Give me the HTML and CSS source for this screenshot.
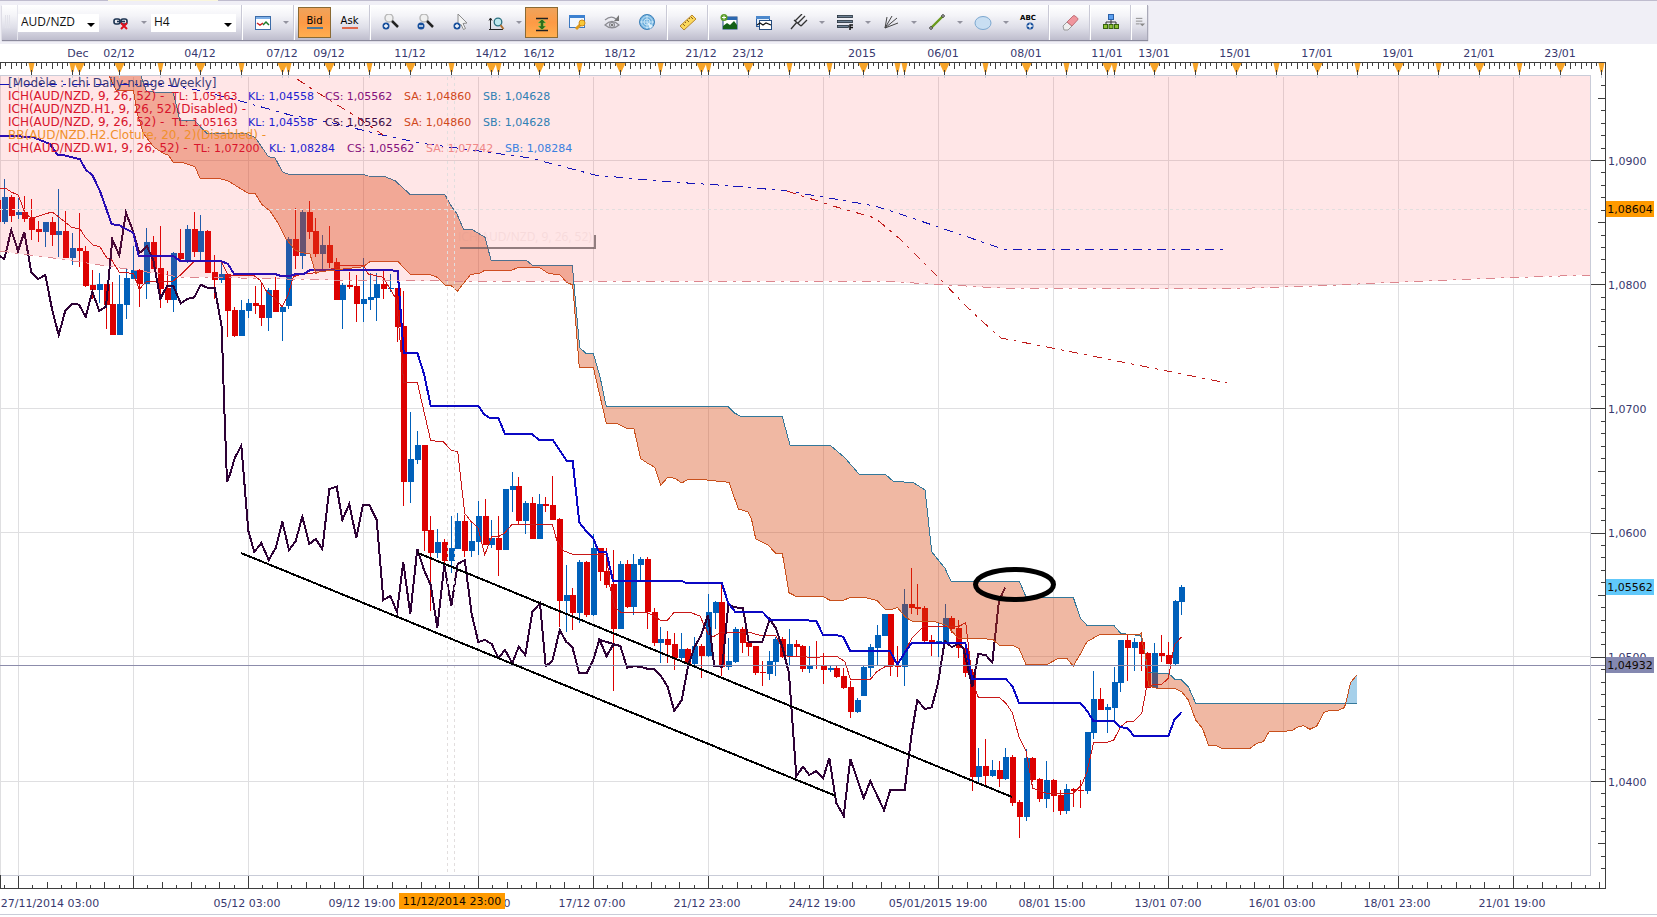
FILE: index.html
```html
<!DOCTYPE html>
<html lang="fr">
<head>
<meta charset="utf-8">
<title>AUD/NZD H4</title>
<link rel="stylesheet" href="styles.css">
</head>
<body>
<header class="top">
<div class="tab"></div>
<nav class="toolbar" aria-label="Chart tools">
<span class="grip"></span>
<label class="combo symbol"><select aria-label="Symbol"><option>AUD/NZD</option></select></label>
<button class="tool" aria-label="Unlink"><svg viewBox="0 0 18 18"><g fill="none" stroke="#1c3350" stroke-width="1.6"><rect x="2" y="5" width="6" height="5" rx="2"/><rect x="9" y="5" width="6" height="5" rx="2"/><path d="M5 7.500h8"/></g><path d="M9 9l6 6m0-6l-6 6" stroke="#e0101c" stroke-width="2"/></svg></button>
<button class="drop" aria-label="Link options"></button>
<label class="combo period"><select aria-label="Period"><option>H4</option></select></label>
<span class="sep"></span>
<button class="tool" aria-label="Indicators"><svg viewBox="0 0 18 18"><rect x="1.500" y="2.500" width="15" height="13" fill="#fff" stroke="#3c6ca8"/><path d="M2 3h14v2H2z" fill="#7fb0e8"/><path d="M3 9l3 2 3-2" stroke="#d02020" stroke-width="1.500" fill="none"/><path d="M9 11l3-3 3 3" stroke="#1c7a28" stroke-width="1.500" fill="none"/></svg></button>
<button class="drop" aria-label="Indicator list"></button>
<span class="sep"></span>
<button class="tool on bid">Bid</button>
<button class="tool ask">Ask</button>
<span class="sep"></span>
<button class="tool" aria-label="Zoom in"><svg viewBox="0 0 18 18"><circle cx="7" cy="4" r="4" fill="#f0f0f0" stroke="#b8b8b8" stroke-width="1.500"/><path d="M10 7l6 6" stroke="#222" stroke-width="2.500"/><circle cx="4" cy="12" r="3.500" fill="#174f9c"/><path d="M4 10v4M2 12h4" stroke="#fff" stroke-width="1.300"/></svg></button>
<button class="tool" aria-label="Zoom out"><svg viewBox="0 0 18 18"><circle cx="7" cy="4" r="4" fill="#f0f0f0" stroke="#b8b8b8" stroke-width="1.500"/><path d="M10 7l6 6" stroke="#222" stroke-width="2.500"/><circle cx="4" cy="12" r="3.500" fill="#174f9c"/><path d="M2 12h4" stroke="#fff" stroke-width="1.300"/></svg></button>
<button class="tool" aria-label="Select"><svg viewBox="0 0 18 18"><path d="M6 0l9 9-4 .500 2.500 5-2 1-2.500-5L6 13z" fill="#f4f4f4" stroke="#8c8c8c"/><circle cx="5" cy="12" r="3.500" fill="#174f9c"/><path d="M5 10v4M3 12h4" stroke="#fff" stroke-width="1.300"/></svg></button>
<button class="tool" aria-label="Zoom axis"><svg viewBox="0 0 18 18"><path d="M3.500 5v11M2 6.500L3.500 4 5 6.500M2 15.500h14" stroke="#222" fill="none"/><circle cx="11" cy="8" r="3.800" fill="#bfe8ee" stroke="#2a7080" stroke-width="1.300"/><path d="M13.500 11l3 4" stroke="#b07030" stroke-width="2"/></svg></button>
<button class="drop" aria-label="Axis zoom options"></button>
<button class="tool on" aria-label="Fit height"><svg viewBox="0 0 18 18"><path d="M3 4.500h12M3 16.500h12" stroke="#222" stroke-width="1.500"/><path d="M9 5l4 4h-2.500v3H13l-4 4-4-4h2.500V9H5z" fill="#2e6e1c" stroke="#9ecb50" stroke-width=".6"/></svg></button>
<button class="tool" aria-label="Window properties"><svg viewBox="0 0 18 18"><rect x="1.500" y="1.500" width="15" height="12" fill="#f2f7fd" stroke="#3c78c0"/><path d="M1 1h16v3H1z" fill="#3c80d0"/><path d="M8 15l5-5" stroke="#e09a18" stroke-width="3"/><circle cx="14" cy="9" r="3" fill="#f8c838" stroke="#d08a18"/></svg></button>
<button class="tool" aria-label="Visibility"><svg viewBox="0 0 18 18"><g fill="none" stroke="#8c8c92" stroke-width="1.200"><path d="M2 11q7-7 14 0-7 6-14 0z"/><circle cx="9" cy="11" r="2.500"/><path d="M2 6q6-5 11-1"/></g><circle cx="9" cy="11" r="1.200" fill="#777"/><path d="M16 1v6h-5z" fill="#777"/></svg></button>
<button class="tool" aria-label="World"><svg viewBox="0 0 18 18"><circle cx="9" cy="8" r="7.500" fill="#6fb0de" stroke="#3c80b8"/><g fill="none" stroke="#d4ecfa" stroke-width=".8"><circle cx="9" cy="8" r="3"/><circle cx="9" cy="8" r="5.500"/><path d="M9 1v14M2 8h14"/></g><path d="M9 8l6 4-3 3z" fill="#e0f2fc"/></svg></button>
<span class="sep"></span>
<button class="tool" aria-label="Ruler"><svg viewBox="0 0 18 18"><path d="M1 12L13 1l4 4L5 16z" fill="#fbd85c" stroke="#b8862c"/><path d="M4 10l2 2M6 8l1 1M8 6l2 2M10 4l1 1M12 3l2 2" stroke="#8a6020"/></svg></button>
<span class="sep"></span>
<button class="tool" aria-label="Add picture"><svg viewBox="0 0 18 18"><rect x="3" y="3" width="14" height="12" fill="#fff" stroke="#1c4884"/><path d="M3 3h14v3H3z" fill="#2c68b0"/><path d="M3 15v-3l4-3 3 2 4-4 3 4v4z" fill="#126018"/><circle cx="4" cy="3.500" r="3.500" fill="#5c9c28"/><path d="M4 1.500v4M2 3.500h4" stroke="#fff"/></svg></button>
<button class="tool" aria-label="Windows"><svg viewBox="0 0 18 18"><rect x="1.500" y="2.500" width="13" height="10" fill="#e4effa" stroke="#2c5c9c"/><path d="M1 2h14v3H1z" fill="#4c88cc"/><rect x="4.500" y="6.500" width="12" height="9" fill="#fff" stroke="#244c80"/><path d="M2 11l3-2 3 2 3-2 5 2" fill="none" stroke="#111" stroke-width="1.200"/></svg></button>
<button class="tool" aria-label="Pitchfork"><svg viewBox="0 0 18 18"><path d="M1 15L7 8M4 6l7 6M5 7l7-7M8 9l7-7M11 12l6-6" fill="none" stroke="#333" stroke-width="1.300"/></svg></button>
<button class="drop" aria-label="Pitchfork options"></button>
<button class="tool" aria-label="Fibonacci"><svg viewBox="0 0 18 18"><g fill="#6d8093" stroke="#26313d" stroke-width=".8"><rect x="1.400" y="1.400" width="15" height="2.200"/><rect x="1.400" y="6.400" width="15" height="2.200"/><rect x="1.400" y="11.400" width="11" height="2.200"/></g><path d="M14 16v-5h3M14 13.500h3" fill="none" stroke="#111" stroke-width="1.500"/></svg></button>
<button class="drop" aria-label="Fibonacci options"></button>
<button class="tool" aria-label="Fan"><svg viewBox="0 0 18 18"><path d="M3 14L5 3M3 14l7-12M3 14L15 4M3 14l13-5" stroke="#444" fill="none"/></svg></button>
<button class="drop" aria-label="Fan options"></button>
<button class="tool" aria-label="Line"><svg viewBox="0 0 18 18"><path d="M3 14L15 2" stroke="#6a9a1c" stroke-width="2.400"/><circle cx="3" cy="14" r="1.300" fill="#eee" stroke="#333"/><circle cx="15" cy="2" r="1.300" fill="#eee" stroke="#333"/></svg></button>
<button class="drop" aria-label="Line options"></button>
<button class="tool" aria-label="Ellipse"><svg viewBox="0 0 18 18"><ellipse cx="9" cy="9" rx="8" ry="6.500" fill="#c8def2" stroke="#7ca8d0"/></svg></button>
<button class="drop" aria-label="Ellipse options"></button>
<button class="tool abc" aria-label="Text ABC"><b>ABC</b><svg viewBox="0 0 18 18"><circle cx="10" cy="9" r="3.500" fill="#174f9c"/><path d="M10 6.500v5M7.500 9h5" stroke="#fff" stroke-width="1.300"/></svg></button>
<span class="sep"></span>
<button class="tool" aria-label="Erase"><svg viewBox="0 0 18 18"><path d="M2 12l4-4 5 4-4 4H3z" fill="#eee" stroke="#999"/><path d="M6 8l6-6q1-1 2 0l2.500 2q1 1 0 2L11 12z" fill="#f0959d" stroke="#c07078"/></svg></button>
<span class="sep"></span>
<button class="tool" aria-label="Hierarchy"><svg viewBox="0 0 18 18"><path d="M9 5v6M4 11V8h10v3" fill="none" stroke="#333"/><rect x="6.500" y=".5" width="5" height="5" fill="#5ca0f0" stroke="#2c60a8"/><g fill="#8cc034" stroke="#38640c"><rect x="1.500" y="10.500" width="4" height="4"/><rect x="7" y="10.500" width="4" height="4"/><rect x="12.500" y="10.500" width="4" height="4"/></g></svg></button>
<span class="sep"></span>
<button class="more" aria-label="More tools"><svg viewBox="0 0 12 12"><path d="M1 1.500h7M1 4.500h7M1 7.500h4" stroke="#888"/><path d="M5 7h6L8 10z" fill="#888"/></svg></button>
</nav>
</header>
<main class="chart">
<svg id="chart" viewBox="0 44 1657 873" role="img" aria-label="AUD/NZD, H4">
<rect class="paper" y="44" width="1657" height="873"/>
<g id="grid"></g>
<g id="candles"></g>
<g id="lines"></g>
<g id="cloud"></g>
<g id="weekly"></g>
<g id="drawings"></g>
<g id="axes"></g>
<g id="legend"></g>
</svg>
</main>
<script src="chart.js"></script>
</body>
</html>
```
FILE: styles.css
```css
* { box-sizing: border-box; }
body { margin: 0; background: #f0eff6; font-family: "DejaVu Sans", Verdana, sans-serif; font-size: 11px; overflow-x: hidden; }
.top { height: 44px; border-top: 1px solid #bfbcce; padding: 4px 0 0 2px; position: relative; }
.tab { position: absolute; left: 108px; top: -1px; width: 110px; height: 1px; background: #faf6dc; }
.toolbar { display: flex; align-items: stretch; width: max-content; height: 35px; background: linear-gradient(#fff, #f4f4f8 30%, #dedee8 65%, #bebdcd); box-shadow: 0 1px 1px #8b8a9c; }
.grip { width: 16px; border-right: 1px solid #e6e6ee; background: repeating-linear-gradient(90deg, #e2e2ea 0 1px, transparent 1px 2px) 3px 10px / 6px 13px no-repeat; }
.combo { position: relative; height: 18px; margin-top: 9px; background: #fff; }
.symbol { width: 81px; margin-right: 4px; }
.period { width: 85px; margin: 9px 3px 0 2px; }
.combo::after { content: ""; position: absolute; right: 4px; top: 9px; border: 4px solid transparent; border-top-color: #000; border-bottom: 0; pointer-events: none; }
.combo select { appearance: none; border: 0; background: none; width: 100%; height: 16px; padding: 0 3px; font: 12px "Open Sans", "Noto Sans", sans-serif; line-height: 16px; color: #111; }
button { border: 0; background: none; padding: 0; font: inherit; color: #000; display: flex; align-items: center; justify-content: center; }
.tool { width: 35px; flex: none; position: relative; }
.tool svg { width: 18px; height: 18px; }
.on { width: 33px; margin: 2px 1px; background: linear-gradient(#efa35c, #fd9a45 50%, #ffae50); border: 1px solid #8a6a34; }
.bid, .ask { font-size: 10px; align-items: flex-start; padding-top: 10px; }
.bid { padding-top: 7px; }
.bid::after, .ask::after { content: ""; position: absolute; width: 16px; height: 2px; top: 22px; background: #e0684c; }
.bid::after { background: #4c7898; top: 19px; }
.abc b { position: absolute; top: 9px; left: 9px; font-size: 7px; line-height: 8px; }
.abc svg { margin-top: 6px; }
.drop { width: 11px; flex: none; }
.drop::after { content: ""; border: 3px solid transparent; border-top-color: #93939f; border-bottom: 0; }
.sep { width: 6px; background: linear-gradient(90deg, transparent 2px, #c9c9d6 2px 3px, #fff 3px 4px, transparent 4px); }
.more { width: 14px; border-right: 1px solid #a9a9b8; }
.more svg { width: 11px; height: 11px; }

.chart svg { display: block; width: 100%; height: auto; }
.chart text { font-size: 11px; fill: #38386e; }
.chart .name { font-size: 12px; }
.chart .tag { fill: #100800; }
.chart .mid { text-anchor: middle; }
.paper { fill: #fff; }
#grid, #candles, #lines, #weekly, #cloud, #axes { shape-rendering: crispEdges; }
#lines polyline, #weekly polyline, #cloud polyline { fill: none; }
.grid { stroke: #dfdfe1; }
.border { fill: none; stroke: #c9ccd8; }
.axis { stroke: #3e3e3e; fill: none; }
.up { fill: #0060ba; }
.down { fill: #dc0000; }
.tenkan { stroke: #c81818; }
.kijun { stroke: #0b08c4; stroke-width: 2; }
.chikou { stroke: #2e0236; stroke-width: 2; }
.senkou-a { stroke: #c8501c; }
.senkou-b { stroke: #34789a; }
.bear { fill: #d8440c; fill-opacity: .38; }
.bull { fill: #a6d0ea; }
.pink { fill: #ff3c46; fill-opacity: .13; }
.dash { stroke-dasharray: 9 6 3 6; }
.w-kijun { stroke: #1414b8; }
.w-tenkan { stroke: #c01c1c; }
.w-span { stroke: #dc868e; }
.cross { stroke: #e2dede; stroke-dasharray: 3 3; shape-rendering: crispEdges; }
.level { stroke: #8c8cab; shape-rendering: crispEdges; }
.trend { stroke: #000; stroke-width: 2; shape-rendering: crispEdges; }
.ring { stroke: #000; stroke-width: 5; fill: none; }
.marker { fill: #f7a428; shape-rendering: auto; }
.shadow { fill: none; stroke: #6e5a5c; stroke-width: 2; opacity: .75; }
.chart .ghost { font-family: "Open Sans", "Noto Sans", sans-serif; font-size: 12px; fill: #c08888; opacity: .12; }
```
FILE: chart.js
```js
const NS = 'http://www.w3.org/2000/svg';
const layer = id => document.getElementById(id);
function add(id, tag, attrs, text) {
  const el = document.createElementNS(NS, tag);
  for (const key in attrs) el.setAttribute(key, attrs[key]);
  if (text !== undefined) el.textContent = text;
  layer(id).appendChild(el);
  return el;
}
const line = (id, cls, x1, y1, x2, y2) => add(id, 'line', { class: cls, x1, y1, x2, y2 });
// Series are stored as panels: origin x, origin y, then points in thirds of a unit.
function series(...panels) {
  const out = [];
  for (const [ox, oy, data] of panels)
    for (const pair of data.trim().split(/\s+/)) {
      const [x, y] = pair.split(',').map(Number);
      out.push([ox + x / 3, oy + y / 3]);
    }
  return out;
}
const str = pts => pts.map(p => p[0].toFixed(1) + ',' + p[1].toFixed(1)).join(' ');
const poly = (id, cls, pts) => add(id, 'polyline', { class: cls, points: str(pts) });

const priceY = [160.5, 284.5, 408.5, 532.5, 656.5, 781.5];
for (let i = 0; i < 14; i++) line('grid', 'grid', 18.5 + 115 * i, 77, 18.5 + 115 * i, 875);
priceY.forEach(y => line('grid', 'grid', 0, y, 1590, y));
line('grid', 'grid', 0.5, 76, 0.5, 875);

// Candles: direction, high, body top, body bottom, low
const groups = [
  [150, `R 150 150 215 215|B 87 141 215 221|R 135 141 197 215|B 145 186 195 208|R 137 186 206 217|R 147 205 239 270|R 213 237 245 275|B 216 216 245 290|R 200 216 254 287|B 117 243 254 320|R 183 243 323 323|B 250 294 323 345|R 190 294 303 350|R 288 303 407 410|R 360 404 419 447|B 370 402 419 458|R 402 402 464 537|R 395 462 554 554|B 375 462 554 554|B 355 384 464 507|B 288 360 387 387|R 357 360 402 470|B 235 276 402 446|R 258 276 356 356|R 228 354 417 473|R 363 415 450 460|B 306 309 450 486|R 238 309 328 330|B 225 237 329 340|R 186 237 305 320|B 195 243 305 330|R 240 243 368 370|R 315 366 390 447|B 335 372 390 398|R 370 373 482 560|R 470 480 557 560|B 450 480 557 557|B 447 460 482 505|R 408 460 467 491|R 397 465 503 527|B 415 420 503 543|R 380 420 486 486|B 465 470 486 573|B 260 267 467 478|R 174 267 318 358|B 180 186 318 358|R 153 186 246 266|R 205 243 311 320|B 255 285 311 357|R 228 285 339 354|R 323 336 450 450|B 400 405 450 536|R 365 405 411 417|R 376 408 461 515|B 325 447 461 515|B 370 441 450 480|B 370 402 444 512|R 360 402 417 446|B 372 414 417 426|R 414 414 531 575|R 423 528 995 1067`],
  [230, `B 547 687 755 818|B 603 645 690 702|R 645 645 903 963|R 858 900 968 1142|B 898 936 968 985|R 927 936 992 1005|B 858 954 992 1030|B 850 873 956 956|R 855 873 963 980|B 873 933 963 981|B 813 858 936 975|R 807 858 944 944|B 870 924 944 953|R 858 924 959 1037|B 776 777 960 960|B 727 768 779 846|R 740 768 873 881|B 812 819 873 911|R 801 819 926 926|B 792 822 927 927|R 800 822 827 845|R 738 825 869 869|R 864 867 1113 1190`],
  [440, `B 375 465 483 575|R 445 465 518 570|B 360 366 518 550|R 362 366 524 530|B 283 324 524 527|R 324 324 395 422|R 325 393 434 445|R 331 432 567 752`],
  [520, `B 123 132 326 326|R 120 132 260 264|B 102 132 261 286|B 112 117 134 182|R 112 117 277 326|R 263 276 368 378|B 320 357 368 428|R 333 357 374 428|R 340 372 413 449|B 340 387 413 425|R 385 387 431 440|B 352 378 431 434|R 372 378 408 474|B 222 276 408 410|B 243 246 279 327|R 190 246 440 468|B 355 423 440 450|B 320 327 426 428|R 320 327 368 400|R 365 366 380 407|R 378 378 459 465|R 423 456 460 498|B 393 423 461 480|B 352 357 426 467|R 350 357 411 415|B 327 372 409 435|R 360 372 380 408|R 375 378 447 455|B 377 438 447 458|R 363 435 438 447|R 400 438 450 491|B 434 444 449 455|R 435 444 471 474|R 445 468 503 508|R 484 501 575 593|B 533 540 575 578|B 435 441 528 528|B 373 381 443 470|B 316 345 383 436|B 282 282 347 347|R 282 282 437 467|R 377 436 440 470|B 206 252 440 497|R 144 252 264 282|R 192 261 267 286|R 258 264 363 368|R 345 360 366 408|B 305 363 369 410|B 252 294 368 370|R 288 294 326 340|R 300 324 384 414|R 382 383 459 470|R 447 456 771 812|B 685 738 771 785|R 657 738 767 795|B 720 750 767 770|R 722 750 776 800|B 684 711 777 780|R 705 711 849 858|R 840 846 891 954|B 686 714 891 903|R 712 714 780 785|R 773 777 836 845|B 722 780 837 863|R 778 780 827 876|R 810 825 873 885|B 792 806 873 883|R 803 806 812 862|R 780 810 813 865|B 636 636 813 822|B 453 537 639 658|R 503 537 570 570|B 553 561 570 638|B 440 486 563 605|B 360 360 488 515|R 343 360 384 482|B 355 366 384 453|R 362 365 402 453|R 395 399 504 504|B 370 399 504 504|R 345 399 408 426|R 365 405 432 432|B 240 243 432 435|B 195 201 246 285`]
];
let slot = -1;
for (const [oy, rows] of groups)
  for (const row of rows.split('|')) {
    const [dir, ...v] = row.split(' ');
    const [high, top, bottom, low] = v.map(n => Math.round(oy + n / 3));
    const cls = dir === 'B' ? 'up' : 'down';
    const x = Math.floor(4.7 + 6.765 * slot++);
    add('candles', 'rect', { class: cls, x, y: high, width: 1, height: Math.max(1, low - high) });
    add('candles', 'rect', { class: cls, x: x - 2, y: top, width: 6, height: Math.max(1, bottom - top) });
  }

poly('lines', 'tenkan', series(
  [0, 150, '0,115 20,117 35,127 55,135 75,190 95,205 125,195 156,186 175,200 215,232 240,237 257,264 280,285 300,291 320,323 335,330 358,367 400,370 418,418 440,393 520,393 545,372 583,333 663,333 684,375 760,375 780,390 800,425 825,445 846,470 866,430 880,380 906,372 950,368 1000,355 1028,345 1090,345 1105,372 1150,382 1160,400 1185,442'],
  [350, 230, '140,210 150,330 161,457 202,457 222,545 242,632 280,635 303,660 323,665 344,850 364,875 384,893 404,975 425,920 445,920 465,908 486,883 607,883 620,930 640,962 668,973 770,973'],
  [600, 520, '20,105 30,200 45,262 62,277 140,277 162,288 180,300 203,300 222,277 270,277 300,288 325,343 340,350 365,336 446,336 465,342 487,347 527,347 560,408 640,412 710,409 735,425 751,477 812,477 830,455 855,440 890,437 910,405 935,355 970,320 1075,320 1097,308 1108,400 1117,480 1135,532'],
  [900, 520, '298,532 318,550 337,578 357,650 378,693 398,805 440,820 520,820 545,795 561,755 581,667 622,667 641,660 662,620 682,604 702,604 725,580 740,500 755,495 785,493 805,475 823,375 845,350']));
poly('lines', 'chikou', series(
  [0, 150, '0,318 13,327 34,240 54,303 73,246 94,367 115,387 136,375 156,477 176,555 196,482 217,461 237,464 257,500 277,425 298,483 318,470 337,268 358,316 378,188 400,246 418,310 440,288 460,330 481,446 501,408 520,408 542,460 562,447 583,442 602,404 622,413 644,414 665,530 672,750'],
  [230, 440, '-9,125 0,103 14,55 34,16 55,272 73,336 94,309 116,360 137,324 157,245 177,330 197,303 217,230 238,312 257,297 277,327 298,147 320,140 337,240 358,192 379,294 399,194 418,194 440,240 460,480 481,468 501,516 520,367 541,522 562,327 582,390 602,435 622,564 643,375 664,498 683,372 704,360 725,522 745,606 765,600 785,612 805,654 825,630 847,669 866,620 886,645 907,516 930,490 947,678 967,664 989,570 1009,606 1027,620 1047,699 1070,699 1090,660 1108,600 1130,648 1150,613 1170,618'],
  [600, 520, '0,360 19,408 40,375 61,377 81,443 101,439 121,440 142,446 163,447 183,468 203,501 223,573 245,540 265,435 284,380 304,345 324,285 343,438 367,440 385,255 405,262 429,264 446,366 487,366 509,297 527,324 547,380 567,460 589,769 609,740 628,765 649,753 670,774 688,714 709,849 731,888 751,717 791,834 811,783 852,871 871,810 914,810 935,640 952,540 974,567 995,562 1014,490 1034,363 1055,381 1075,372 1090,385 1117,500 1135,402 1157,405 1177,428 1196,250 1206,222 1216,203']));
poly('lines', 'kijun', series(
  [0, 0, '0,408 40,408 100,412 150,432'],
  [0, 150, '172,14 190,15 240,28 258,60 277,75 300,123 335,223 357,225 370,233 400,248 416,318 520,318 541,333 663,333 684,342 702,372 825,372 843,378 870,378 885,373 912,372 930,360 1170,360 1193,364'],
  [350, 230, '161,368 202,368 223,435 242,528 385,528 402,552 419,564 445,564 465,612 546,612 567,630 608,630 650,692 668,693 688,877 708,903 729,923 746,965 769,965 789,1053'],
  [600, 520, '245,183 257,188 365,188 385,250 405,275 487,275 509,299 590,299 649,303 669,345 709,345 729,350 751,393 870,393 892,434 915,397 935,369 1096,369 1117,477'],
  [900, 520, '317,477 337,498 357,549 541,549 561,572 580,603 641,603 662,622 682,624 702,648 805,648 823,600 845,575']));

const weeklySpan = [[0,251],[53,258],[100,265],[120,268],[180,277],[240,278],[333,280],[450,281],[880,281],[1000,288],[1220,289],[1317,286],[1400,282],[1500,278],[1590,275]];
add('weekly', 'polygon', { class: 'pink', points: '0,76 ' + str(weeklySpan) + ' 1590,76' });
poly('weekly', 'dash w-span', weeklySpan);
poly('weekly', 'dash w-kijun', [[0,84],[160,84],[197,90],[233,99],[290,115],[333,123],[382,135],[420,143],[530,158],[595,175],[657,181],[733,186],[787,191],[823,197],[875,206],[900,214],[1003,249],[1227,249]]);
poly('weekly', 'dash w-tenkan', [[297,79],[315,91],[360,119],[383,135]]);
poly('weekly', 'dash w-tenkan', [[787,191],[833,206],[875,218],[900,239],[944,283],[964,304],[983,322],[1001,338],[1057,349],[1227,383]]);

const spanA = series(
  [0, 0, '328,228 348,270 400,270 412,340 430,400 460,440'],
  [0, 150, '490,10 505,15 520,37 550,38 585,50 600,85 655,85 683,92 720,115 745,130 765,130 785,163 810,183 835,220 857,265 885,300 905,308 930,312 947,370 960,365 1090,350 1110,335'],
  [350, 230, '143,94 180,132 235,132 262,142 285,165 305,168 322,184 362,133 385,131 405,121 485,121 505,112 568,112 595,130 630,135 650,157 668,165 688,412 730,412 769,580 805,582 830,595 852,597 872,686 893,700 914,712 932,766 953,742 975,745 995,759 1015,748 1050,748 1137,757'],
  [600, 520, '415,-33 445,-24 455,0 467,56 505,76 527,100 547,100 567,218 590,230 670,230 690,241 730,241 755,231 800,234 832,242 855,268 880,267 892,262 915,290 935,303 1000,303 1040,317 1075,355 1160,357'],
  [900, 520, '278,358 298,376 337,376 357,385 378,434 440,434 475,415 500,415 520,438 541,402 561,365 600,343 720,343 724,338 730,380 740,425 745,497 770,505 825,505 845,515 865,540 887,600 908,626 925,675 950,677 965,685 1050,685 1070,670 1090,665 1108,634 1157,634 1180,630 1190,622 1210,617 1230,628 1250,618 1272,577 1290,571 1315,571 1333,563 1337,550']);
const spanATail = series([900, 520, '1337,550 1352,487 1371,465']);
const spanB = series(
  [0, 0, '423,228 440,275 520,279 540,362 585,363 620,400 735,400 765,412'],
  [0, 150, '795,5 805,20 825,23 847,65 865,73 1090,73 1105,78 1155,80 1185,92'],
  [400, 180, '30,43 134,43 155,80 170,100 190,147 215,148 255,172 273,240 378,240 397,256 517,256 528,380 539,503 558,520 580,520 600,590 619,680 985,680 1005,700 1025,710 1147,710 1170,795 1290,795 1335,834 1377,882 1458,885 1479,903 1542,909 1575,930'],
  [900, 520, '85,0 95,95 115,120 135,145 153,184 358,184 378,230 387,232 520,232 541,295 561,316 641,316 662,340 685,343 722,347 735,400 743,458 805,460 825,478 843,478 865,500 887,550 1337,550']);
const end = [1357, 703.3];
add('cloud', 'polygon', { class: 'bear', points: str(spanA) + ' ' + str([...spanB].reverse()) });
add('cloud', 'polygon', { class: 'bull', points: str([...spanATail, end]) });
poly('cloud', 'senkou-b', [...spanB, end]);
poly('cloud', 'senkou-a', [...spanA, ...spanATail]);

line('drawings', 'cross', 447.5, 77, 447.5, 875);
line('drawings', 'cross', 454.5, 77, 454.5, 875);
line('drawings', 'cross', 0, 209.5, 1590, 209.5);
line('drawings', 'level', 0, 665.5, 1605, 665.5);
line('drawings', 'trend', 241, 553, 836, 796);
line('drawings', 'trend', 418, 553, 1012, 797);
add('drawings', 'ellipse', { class: 'ring', cx: 1014.5, cy: 584.5, rx: 39, ry: 15 });
add('drawings', 'text', { class: 'ghost', x: 458, y: 241 }, 'ICH(AUD/NZD, 9, 26, 52)');
add('drawings', 'path', { class: 'shadow', d: 'M460 248H595V235' });

// Frame and axes
add('axes', 'path', { class: 'border', d: 'M0 75.500H1590.500V875.500H0' });
add('axes', 'path', { class: 'axis', d: 'M0 62.500H1605.500V888.500H0.500V875' });
const days = [31,72,79,119,160,200,241,282,288,329,369,410,451,491,498,539,579,620,660,701,708,748,789,829,863,897,904,944,985,1026,1066,1107,1114,1154,1195,1236,1276,1317,1357,1398,1438,1479,1519,1560,1601];
const dates = [[78,'Dec'],[119,'02/12'],[200,'04/12'],[282,'07/12'],[329,'09/12'],[410,'11/12'],[491,'14/12'],[539,'16/12'],[620,'18/12'],[701,'21/12'],[748,'23/12'],[862,'2015'],[943,'06/01'],[1026,'08/01'],[1107,'11/01'],[1154,'13/01'],[1235,'15/01'],[1317,'17/01'],[1398,'19/01'],[1479,'21/01'],[1560,'23/01']];
[-10, ...days].forEach((d, i) => {
  const next = days[i];
  if (next - d < 20) return;
  const n = Math.round((next - d) / 5.07);
  for (let k = 1; k < n; k++) {
    const x = Math.round(d + (next - d) * k / n) + 0.5;
    if (x > 0) line('axes', 'axis', x, 63, x, (n - k) % 2 ? 66 : 69);
  }
});
days.forEach(d => {
  const w = dates.some(([x]) => Math.abs(x - d) < 2) ? 5 : 3;
  add('axes', 'path', { class: 'marker', d: `M${d + 0.5 - w} 63h${2 * w}l${-w + 1} 9h-2z` });
  line('axes', 'axis', d + 0.5, 70, d + 0.5, 75);
  line('axes', 'border', d + 0.5, 75, d + 0.5, 78);
});
dates.forEach(([x, t]) => add('axes', 'text', { class: 'mid', x, y: 57 }, t));
for (let k = -7; k <= 57; k++) {
  const y = Math.round(160 + 12.42 * k) + 0.5;
  if (y < 80 || y > 872) continue;
  line('axes', 'axis', k % 10 === 0 ? 1591 : k % 5 === 0 ? 1598 : 1601, y, 1605, y);
}
for (let k = -1; k <= 110; k++) {
  const x = Math.round(18 + 14.375 * k) + 0.5;
  if (x > 1603) break;
  line('axes', 'axis', x, k % 8 === 0 ? 876 : k % 2 === 0 ? 882 : 885, x, 888);
}
['1,0900', '1,0800', '1,0700', '1,0600', '1,0500', '1,0400'].forEach((t, i) => add('axes', 'text', { x: 1608, y: priceY[i] + 4.5 }, t));
[[50,'27/11/2014 03:00'],[247,'05/12 03:00'],[362,'09/12 19:00'],[477,'13/12 23:00'],[592,'17/12 07:00'],[707,'21/12 23:00'],[822,'24/12 19:00'],[938,'05/01/2015 19:00'],[1052,'08/01 15:00'],[1168,'13/01 07:00'],[1282,'16/01 03:00'],[1397,'18/01 23:00'],[1512,'21/01 19:00']]
  .forEach(([x, t]) => add('axes', 'text', { class: 'mid', x, y: 907 }, t));
[[1606, 201, 48, '#ff9a00', '1,08604'], [1606, 579, 48, '#60c8fa', '1,05562'], [1606, 657, 48, '#8488b0', '1,04932'], [399, 893, 106, '#ff9a00', '11/12/2014 23:00']]
  .forEach(([x, y, width, fill, t]) => {
    add('axes', 'rect', { x, y, width, height: 16, fill });
    add('axes', 'text', { class: 'tag mid', x: x + width / 2, y: y + 12 }, t);
  });
line('axes', 'border', 0, 914.5, 1657, 914.5);

const red = '#d8142c', blue = '#1e1ed0';
[
  [87, [[8, '[Modèle : Ichi Daily-nuage Weekly]', '#3c3c78']]],
  [100, [[8, 'ICH(AUD/NZD, 9, 26, 52) -', red], [172, 'TL: 1,05163', red], [248, 'KL: 1,04558', blue], [325, 'CS: 1,05562', '#84107c'], [404, 'SA: 1,04860', '#d0481a'], [483, 'SB: 1,04628', '#2f80b4']]],
  [113, [[8, 'ICH(AUD/NZD.H1, 9, 26, 52)(Disabled) -', red]]],
  [126, [[8, 'ICH(AUD/NZD, 9, 26, 52) -', red], [172, 'TL: 1,05163', red], [248, 'KL: 1,04558', blue], [325, 'CS: 1,05562', '#3c0a46'], [404, 'SA: 1,04860', '#d0481a'], [483, 'SB: 1,04628', '#2f80b4']]],
  [139, [[8, 'BB(AUD/NZD.H2.Cloture, 20, 2)(Disabled) -', '#f0902c']]],
  [152, [[8, 'ICH(AUD/NZD.W1, 9, 26, 52) -', red], [194, 'TL: 1,07200', red], [269, 'KL: 1,08284', blue], [347, 'CS: 1,05562', '#84107c'], [426, 'SA: 1,07742', '#f08888'], [505, 'SB: 1,08284', '#3a80e0']]]
].forEach(([y, parts]) => parts.forEach(([x, t, color]) =>
  add('legend', 'text', { x, y, class: x === 8 ? 'name' : '', style: 'fill:' + color }, t)));
```
